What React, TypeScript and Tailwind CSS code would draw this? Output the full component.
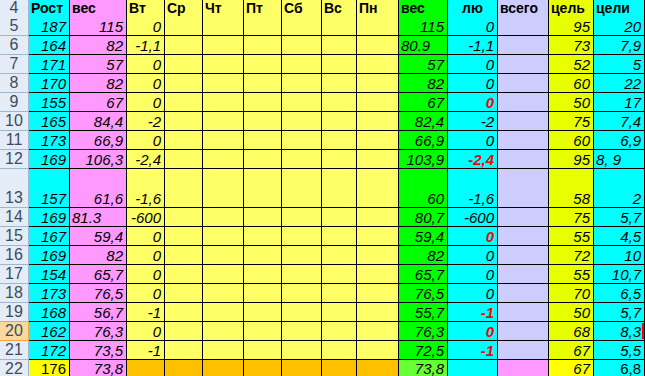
import React from 'react';

type Cell = { v?: string; left?: boolean; red?: boolean; upright?: boolean; bg?: string };

// column backgrounds
const COLS = [
  'bg-[#00ffff]', // Рост
  'bg-[#ff99ff]', // вес
  'bg-[#ffff66]', // Вт
  'bg-[#ffff66]', // Ср
  'bg-[#ffff66]', // Чт
  'bg-[#ffff66]', // Пт
  'bg-[#ffff66]', // Сб
  'bg-[#ffff66]', // Вс
  'bg-[#ffff66]', // Пн
  'bg-[#00ff00]', // вес
  'bg-[#00ffff]', // лю
  'bg-[#ccccff]', // всего
  'bg-[#e8ff00]', // цель
  'bg-[#00ffff]', // цели
];

const HEAD = ['Рост', 'вес', 'Вт', 'Ср', 'Чт', 'Пт', 'Сб', 'Вс', 'Пн', 'вес', 'лю', 'всего', 'цель', 'цели'];

type Row = { n: number; h?: string; cells: Cell[]; sel?: boolean; last?: boolean };

const r = (
  n: number,
  rost: string,
  ves: Cell | string,
  vt: string,
  ves2: Cell | string,
  lu: Cell | string,
  goal: string,
  goals: Cell | string,
  extra: Partial<Row> = {}
): Row => {
  const c = (x: Cell | string): Cell => (typeof x === 'string' ? { v: x } : x);
  return {
    n,
    ...extra,
    cells: [{ v: rost }, c(ves), { v: vt }, {}, {}, {}, {}, {}, {}, c(ves2), c(lu), {}, { v: goal }, c(goals)],
  };
};

const rows: Row[] = [
  r(5, '187', '115', '0', '115', '0', '95', '20'),
  r(6, '164', '82', '-1,1', { v: '80.9', left: true }, '-1,1', '73', '7,9'),
  r(7, '171', '57', '0', '57', '0', '52', '5'),
  r(8, '170', '82', '0', '82', '0', '60', '22'),
  r(9, '155', '67', '0', '67', { v: '0', red: true }, '50', '17'),
  r(10, '165', '84,4', '-2', '82,4', '-2', '75', '7,4'),
  r(11, '173', '66,9', '0', '66,9', '0', '60', '6,9'),
  r(12, '169', '106,3', '-2,4', '103,9', { v: '-2,4', red: true }, '95', { v: '8, 9', left: true }),
  r(13, '157', '61,6', '-1,6', '60', '-1,6', '58', '2', { h: 'h-[39px]' }),
  r(14, '169', { v: '81.3', left: true }, '-600', '80,7', '-600', '75', '5,7'),
  r(15, '167', '59,4', '0', '59,4', { v: '0', red: true }, '55', '4,5'),
  r(16, '169', '82', '0', '82', '0', '72', '10'),
  r(17, '154', '65,7', '0', '65,7', '0', '55', '10,7'),
  r(18, '173', '76,5', '0', '76,5', '0', '70', '6,5'),
  r(19, '168', '56,7', '-1', '55,7', { v: '-1', red: true }, '50', '5,7'),
  r(20, '162', '76,3', '0', '76,3', { v: '0', red: true }, '68', '8,3', { sel: true }),
  r(21, '172', '73,5', '-1', '72,5', { v: '-1', red: true }, '67', '5,5'),
  {
    n: 22,
    h: 'h-[17px]',
    last: true,
    cells: [
      { v: '176', upright: true, bg: 'bg-[#ffff00]' },
      { v: '73,8' },
      { bg: 'bg-[#ffc000]' },
      { bg: 'bg-[#ffc000]' },
      { bg: 'bg-[#ffc000]' },
      { bg: 'bg-[#ffc000]' },
      { bg: 'bg-[#ffc000]' },
      { bg: 'bg-[#ffc000]' },
      { bg: 'bg-[#ffc000]' },
      { v: '73,8', bg: 'bg-[#66ff33]' },
      {},
      { bg: 'bg-[#ff99ff]' },
      { v: '67', bg: 'bg-[#ffff00]' },
      { v: '6,8', upright: true },
    ],
  },
];

const GRID = 'grid grid-cols-[29px_41px_57px_38px_38px_41px_38px_40px_35px_42px_49px_50px_51px_45px_51px]';

export default function App() {
  return (
    <div className="w-[645px] h-[376px] overflow-hidden bg-white font-['Liberation_Sans',Arial,sans-serif] text-[15px] leading-none text-black">
      {/* header row */}
      <div className={`${GRID} h-[17px]`}>
        <div className="flex items-end justify-center pb-[1px] bg-[#e4ecf7] border-r border-b border-[#9eb6ce] text-[#3c4b5e] text-[16px]">4</div>
        {HEAD.map((h, i) => (
          <div
            key={i}
            className={`flex items-end pb-[2px] text-[14px] font-bold border-r border-b border-black ${COLS[i]} ${
              i === 10 ? 'justify-center' : 'pl-[2px]'
            }`}
          >
            {h}
          </div>
        ))}
      </div>

      {rows.map((row) => (
        <div key={row.n} className={`${GRID} ${row.h ?? 'h-[19px]'}`}>
          <div
            className={`flex items-end justify-center text-[16px] border-r ${
              row.last ? 'pb-0' : 'border-b pb-[1px]'
            } ${
              row.sel
                ? 'bg-[#f9d99f] border-[#f2a53d] text-[#3c4b5e]'
                : 'bg-[#e4ecf7] border-[#9eb6ce] text-[#3c4b5e]'
            }`}
          >
            {row.n}
          </div>
          {row.cells.map((c, i) => (
            <div
              key={i}
              className={`relative flex items-end border-r border-black ${row.last ? 'pb-[1px]' : 'border-b pb-[1px]'} ${
                c.bg ?? COLS[i]
              } ${c.left ? 'justify-start pl-[2px]' : 'justify-end pr-[3px]'} ${c.upright ? '' : 'italic'} ${
                c.red ? 'text-[#ff0000] font-bold' : ''
              }`}
            >
              {c.v}
              {row.sel && i === 13 && <span className="absolute right-0 top-[1px] bottom-[1px] w-[2px] bg-[#ff0000]" />}
            </div>
          ))}
        </div>
      ))}
    </div>
  );
}
